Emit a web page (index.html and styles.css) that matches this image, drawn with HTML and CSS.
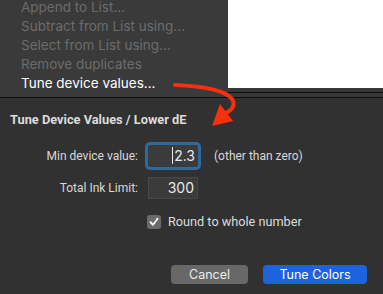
FILE: index.html
```html
<!DOCTYPE html>
<html>
<head>
<meta charset="utf-8">
<link rel="stylesheet" href="styles.css">
</head>
<body>
<div class="screen">
  <div class="top">
    <ul class="menu">
      <li class="dis">Append to List...</li>
      <li class="dis">Subtract from List using...</li>
      <li class="dis">Select from List using...</li>
      <li class="dis">Remove duplicates</li>
      <li class="on">Tune device values...</li>
    </ul>
    <div class="side">
      <div class="white"></div>
      <div class="band"></div>
      <div class="rule"></div>
      <div class="band"></div>
    </div>
  </div>
  <div class="rule"></div>
  <div class="dialog">
    <h1 class="title">Tune Device Values / Lower dE</h1>
    <div class="form">
      <label class="lbl">Min device value:</label>
      <div class="field focus"><span class="caret"></span>2.3</div>
      <span class="hint">(other than zero)</span>
      <label class="lbl">Total Ink Limit:</label>
      <div class="field plain">300</div>
      <span></span>
      <span></span>
      <div class="check"><span class="box"><svg width="10" height="10" viewBox="0 0 10 10"><path d="M1.5 5.2 L4 7.8 L8.6 1.8" fill="none" stroke="#fff" stroke-width="1.8" stroke-linecap="round" stroke-linejoin="round"/></svg></span>Round to whole number</div>
    </div>
    <div class="buttons">
      <button class="btn cancel">Cancel</button>
      <button class="btn primary">Tune Colors</button>
    </div>
  </div>
  <svg class="arrow" width="383" height="294" viewBox="0 0 383 294">
    <path d="M175 85 C200 86 224 89 232 99 C236 105 232 110 226 113" fill="none" stroke="#f7300e" stroke-width="4" stroke-linecap="round"/>
    <polygon points="212,126 233,121 220,104" fill="#f7300e"/>
  </svg>
</div>
</body>
</html>
```
FILE: styles.css
```css
* { box-sizing: border-box; }
html, body { margin: 0; padding: 0; }
body {
  width: 383px;
  height: 294px;
  overflow: hidden;
  background: #313131;
  font-family: "Inter", "Roboto", "Liberation Sans", sans-serif;
}
.screen { position: relative; width: 383px; height: 294px; display: flex; flex-direction: column; }
.top { display: flex; height: 97px; }
.menu {
  list-style: none;
  margin: 0;
  padding: 0 0 0 21px;
  width: 228px;
  background: #3a3a3a;
  overflow: hidden;
}
.menu li {
  font-size: 13.5px;
  line-height: 19px;
  height: 19px;
  white-space: nowrap;
}
.menu li:first-child { margin-top: -2px; }
.dis { color: #6c6c6c; }
.on { color: #ffffff; }
.side { flex: 1; display: flex; flex-direction: column; }
.white { height: 88px; background: #ffffff; }
.band { height: 4px; background: #383838; }
.rule { height: 1px; background: #0c0c0c; }
.dialog { flex: 1; background: #313131; padding: 14px 0 0 10px; }
.title {
  margin: 0;
  font-family: "Roboto", "Inter", sans-serif;
  font-size: 12.8px;
  font-weight: 700;
  color: #dcdcdc;
  line-height: 16px;
}
.form {
  margin-top: 17px;
  display: grid;
  grid-template-columns: 128px 55px auto;
  column-gap: 9px;
  row-gap: 10px;
  align-items: center;
  color: #d8d8d8;
  font-family: "Roboto", "Inter", sans-serif;
  font-size: 12px;
}
.lbl { text-align: right; }
.field {
  height: 22px;
  width: 50px;
  background: #3b3b3b;
  color: #e8e8e8;
  font-family: "Inter", sans-serif;
  font-size: 14px;
  text-align: right;
  padding: 0 3px;
  line-height: 22px;
  position: relative;
  margin-left: 1px;
}
.focus {
  outline: 3px solid #2d6a9f;
  outline-offset: 0;
  border-radius: 2px;
}
.plain { border: 1px solid #474747; line-height: 20px; }
.caret {
  display: inline-block;
  width: 1px;
  height: 17px;
  background: #eaeaea;
  vertical-align: -3px;
  margin-right: 1px;
}
.hint { color: #d8d8d8; padding-left: 3px; }
.check {
  grid-column: 2 / span 2;
  display: flex;
  align-items: center;
  gap: 7px;
  font-size: 12.7px;
  color: #dcdcdc;
  margin-top: 5px;
}
.box {
  width: 14px;
  height: 14px;
  border-radius: 3px;
  background: #6b6b6b;
  display: flex;
  align-items: center;
  justify-content: center;
}
.buttons {
  display: flex;
  justify-content: flex-end;
  gap: 15px;
  padding-right: 16px;
  margin-top: 36px;
}
.btn {
  height: 19px;
  border: none;
  border-radius: 4px;
  font-family: inherit;
  font-size: 12.5px;
  color: #ececec;
  padding: 0;
  line-height: 19px;
}
.cancel { width: 77px; background: #686868; }
.primary { width: 104px; background: #1f62de; color: #ffffff; }
.arrow { position: absolute; left: 0; top: 0; pointer-events: none; }
```
